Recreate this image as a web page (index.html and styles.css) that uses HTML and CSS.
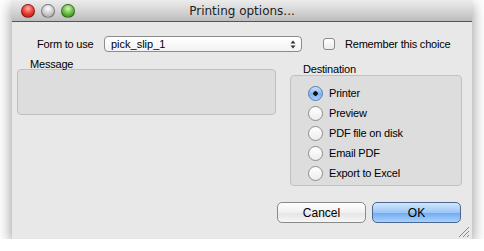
FILE: index.html
```html
<!DOCTYPE html>
<html lang="en">
<head>
  <meta charset="UTF-8">
  <title>Printing options...</title>
  <link rel="stylesheet" href="styles.css">
</head>
<body>
  <div class="window">
    <div class="titlebar">
      <div class="lights">
        <span class="light red"></span>
        <span class="light gray"></span>
        <span class="light green"></span>
      </div>
      <div class="title">Printing options...</div>
      <div></div>
    </div>

    <div class="content">
      <div class="form-row">
        <span class="label form-label">Form to use</span>
        <div class="select">
          <span>pick_slip_1</span>
          <svg width="6" height="9" viewBox="0 0 6 9"><path d="M3 0.5 L5.5 3.5 H0.5 Z M3 8.5 L5.5 5.5 H0.5 Z" fill="#333"/></svg>
        </div>
        <span class="checkbox"></span>
        <span class="label">Remember this choice</span>
      </div>

      <div class="groups">
        <div class="group message">
          <div class="label group-label">Message</div>
          <div class="box message-box"></div>
        </div>
        <div class="group destination">
          <div class="label group-label">Destination</div>
          <div class="box dest-box">
            <div class="radio-row"><span class="radio on"></span><span class="label">Printer</span></div>
            <div class="radio-row"><span class="radio"></span><span class="label">Preview</span></div>
            <div class="radio-row"><span class="radio"></span><span class="label">PDF file on disk</span></div>
            <div class="radio-row"><span class="radio"></span><span class="label">Email PDF</span></div>
            <div class="radio-row"><span class="radio"></span><span class="label">Export to Excel</span></div>
          </div>
        </div>
      </div>

      <div class="buttons">
        <button class="btn">Cancel</button>
        <button class="btn primary">OK</button>
      </div>
    </div>

    <svg class="grip" width="12" height="12" viewBox="0 0 12 12">
      <path d="M1 11 L11 1 M5 11 L11 5 M9 11 L11 9" stroke="#888" stroke-width="1"/>
    </svg>
  </div>
</body>
</html>
```

FILE: styles.css
```css
* { box-sizing: border-box; margin: 0; padding: 0; }
body {
  background: #ffffff;
  font-family: 'Liberation Sans', Arial, sans-serif;
  font-size: 11px;
  color: #000;
}
.window {
  position: relative;
  width: 460px;
  height: 239px;
  margin-left: 12px;
  background: #e8e8e8;
  box-shadow: 0 5px 14px rgba(0,0,0,0.45);
}
.titlebar {
  height: 22px;
  display: grid;
  grid-template-columns: 1fr auto 1fr;
  align-items: center;
  background: linear-gradient(#ececec, #d6d6d6 50%, #bdbdbd);
  border-bottom: 1px solid #555;
}
.lights {
  display: flex;
  gap: 6px;
  padding-left: 9px;
}
.light {
  width: 14px;
  height: 14px;
  border-radius: 50%;
  border: 1px solid rgba(0,0,0,0.35);
}
.red { background: radial-gradient(circle at 50% 30%, #ffb0a8, #e8342a 55%, #a81c14); }
.gray { background: radial-gradient(circle at 50% 30%, #ffffff, #c8c8c8 55%, #9a9a9a); }
.green { background: radial-gradient(circle at 50% 30%, #d8f6b0, #5cb83a 55%, #2e7a1a); }
.title {
  font-family: 'DejaVu Sans', sans-serif;
  font-size: 12px;
  color: #222;
}
.label {
  letter-spacing: -0.2px;
  line-height: 12px;
}
.form-row {
  display: flex;
  align-items: center;
  height: 16px;
  margin-top: 14px;
}
.form-label {
  margin-left: 25px;
  width: 67px;
}
.select {
  width: 198px;
  height: 16px;
  display: flex;
  align-items: center;
  justify-content: space-between;
  padding: 0 5px 0 6px;
  border: 1px solid #8c8c8c;
  border-radius: 4px;
  background: linear-gradient(#ffffff, #f2f2f2);
}
.checkbox {
  width: 12px;
  height: 12px;
  margin: 0 10px 0 21px;
  border: 1px solid #8a8a8a;
  border-radius: 3px;
  background: linear-gradient(#ffffff, #ececec);
}
.groups {
  display: flex;
  gap: 14px;
  margin: 6px 0 0 5px;
}
.group-label {
  padding-left: 13px;
  height: 11px;
}
.destination .group-label {
  margin-top: 5px;
  height: 12px;
}
.box {
  background: #dddddd;
  border: 1px solid #c0c0c0;
  border-radius: 4px;
}
.message-box {
  width: 259px;
  height: 46px;
}
.dest-box {
  width: 172px;
  height: 111px;
  padding: 7px 0 0 17px;
}
.radio-row {
  display: flex;
  align-items: center;
  height: 20px;
  gap: 6px;
}
.radio {
  width: 15px;
  height: 15px;
  border-radius: 50%;
  border: 1px solid #8c8c8c;
  background: linear-gradient(#ffffff, #ededed);
}
.radio.on {
  border-color: #5a7aa8;
  background: radial-gradient(circle, #111 0 2px, transparent 2.5px),
              linear-gradient(#cfe3fb, #7fb2ee 55%, #a9d0fb);
}
.buttons {
  display: flex;
  justify-content: flex-end;
  gap: 6px;
  margin: 16px 11px 0 0;
}
.btn {
  width: 89px;
  height: 21px;
  font-family: 'Liberation Sans', Arial, sans-serif;
  font-size: 12px;
  color: #000;
  border: 1px solid #8a8a8a;
  border-radius: 5px;
  background: linear-gradient(#ffffff, #f0f0f0 50%, #e4e4e4 51%, #f6f6f6);
}
.btn.primary {
  border-color: #4c6690;
  background: linear-gradient(#d3e6fc, #9cc6f6 50%, #6eaaf0 51%, #a6d2fd);
}
.grip {
  position: absolute;
  right: 2px;
  bottom: 1px;
}
```
